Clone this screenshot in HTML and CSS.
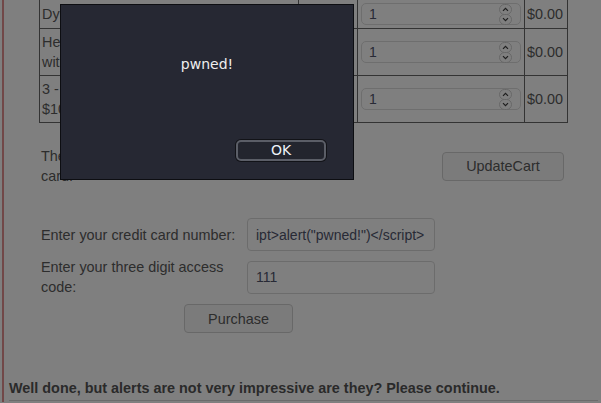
FILE: index.html
```html
<!DOCTYPE html>
<html lang="en">
<head>
<meta charset="utf-8">
<title>Reflected XSS</title>
<link rel="stylesheet" href="styles.css">
</head>
<body>
<div class="page">
  <table class="cart">
    <colgroup>
      <col class="c-name"><col class="c-price"><col class="c-qty"><col class="c-total">
    </colgroup>
    <tr>
      <td>Dynex - Traditional Notebook Case</td>
      <td class="num">27.99</td>
      <td><div class="qty"><input class="qty-input" type="text" value="1"><svg class="spin" width="13" height="21" viewBox="0 0 13 21"><rect x="0.5" y="0.5" width="12" height="10" rx="5" class="spin-box"/><rect x="0.5" y="10.5" width="12" height="10" rx="5" class="spin-box"/><polyline points="4,6.8 6.5,4.3 9,6.8" class="spin-arrow"/><polyline points="4,14.2 6.5,16.7 9,14.2" class="spin-arrow"/></svg></div></td>
      <td>$0.00</td>
    </tr>
    <tr>
      <td>Hewlett-Packard - Pavilion Notebook with Intel Centrino</td>
      <td class="num">1599.99</td>
      <td><div class="qty"><input class="qty-input" type="text" value="1"><svg class="spin" width="13" height="21" viewBox="0 0 13 21"><rect x="0.5" y="0.5" width="12" height="10" rx="5" class="spin-box"/><rect x="0.5" y="10.5" width="12" height="10" rx="5" class="spin-box"/><polyline points="4,6.8 6.5,4.3 9,6.8" class="spin-arrow"/><polyline points="4,14.2 6.5,16.7 9,14.2" class="spin-arrow"/></svg></div></td>
      <td>$0.00</td>
    </tr>
    <tr>
      <td>3 - Year Performance Service Plan $1000 and Over</td>
      <td class="num">299.99</td>
      <td><div class="qty"><input class="qty-input" type="text" value="1"><svg class="spin" width="13" height="21" viewBox="0 0 13 21"><rect x="0.5" y="0.5" width="12" height="10" rx="5" class="spin-box"/><rect x="0.5" y="10.5" width="12" height="10" rx="5" class="spin-box"/><polyline points="4,6.8 6.5,4.3 9,6.8" class="spin-arrow"/><polyline points="4,14.2 6.5,16.7 9,14.2" class="spin-arrow"/></svg></div></td>
      <td>$0.00</td>
    </tr>
  </table>
  <br>
  <table class="checkout">
    <colgroup>
      <col class="c-label"><col class="c-field"><col class="c-action">
    </colgroup>
    <tr>
      <td>The total charged to your credit card:</td>
      <td>$0.00</td>
      <td class="center"><button class="btn" type="button">UpdateCart</button></td>
    </tr>
    <tr><td>&nbsp;</td><td></td><td></td></tr>
    <tr>
      <td>Enter your credit card number:</td>
      <td><input class="field" type="text" value="ipt&gt;alert(&quot;pwned!&quot;)&lt;/script&gt;"></td>
      <td></td>
    </tr>
    <tr>
      <td>Enter your three digit access code:</td>
      <td><input class="field" type="text" value="111"></td>
      <td></td>
    </tr>
    <tr>
      <td colspan="2" class="center purchase-cell"><button class="btn" type="button">Purchase</button></td>
      <td></td>
    </tr>
  </table>
  <div class="feedback">Well done, but alerts are not very impressive are they? Please continue.</div>
</div>
<div class="overlay"></div>
<div class="dialog" role="alertdialog">
  <p class="dialog-msg">pwned!</p>
  <button class="dialog-ok" type="button">OK</button>
</div>
</body>
</html>
```

FILE: styles.css
```css
html, body {
  margin: 0;
  height: 100%;
}
body {
  font-family: "Liberation Sans", Arial, sans-serif;
  font-size: 14.4px;
  line-height: 20px;
  color: #5a5a5a;
  background: #ffffff;
  overflow: hidden;
}
.page {
  margin-left: 2px;
  margin-right: 3px;
  border-left: 2px solid #e29191;
  padding-left: 5px;
  min-height: 100%;
  box-sizing: border-box;
}

/* cart table */
.cart {
  margin: -1px 0 0 30px;
  width: 529px;
  table-layout: fixed;
  border-collapse: separate;
  border-spacing: 0;
  border-top: 1px solid #666666;
  border-left: 1px solid #666666;
}
.c-name { width: 259px; }
.c-price { width: 59px; }
.c-qty { width: 167px; }
.c-total { width: 43px; }
.cart td {
  padding: 3px;
  border-right: 1px solid #666666;
  border-bottom: 1px solid #666666;
  vertical-align: middle;
  overflow: hidden;
}
.cart td:first-child { padding-left: 2px; }
.cart td:last-child { padding-left: 2px; padding-right: 0; white-space: nowrap; }
.num { text-align: right; }

.qty {
  display: flex;
  align-items: center;
  height: 22px;
  box-sizing: border-box;
  border: 1px solid #dcdcdc;
  border-radius: 5px;
  padding: 0 8px 0 7px;
  background: #ffffff;
}
.qty-input {
  flex: 1;
  min-width: 0;
  border: 0;
  padding: 0;
  margin: 0;
  background: transparent;
  font: 14px/20px "Liberation Sans", Arial, sans-serif;
  color: #50546c;
  outline: none;
}
.spin {
  flex: none;
  margin: -1px 0;
  display: block;
}
.spin-box {
  fill: #ffffff;
  stroke: #cfcfcf;
  stroke-width: 1;
}
.spin-arrow {
  fill: none;
  stroke: #3c3c3c;
  stroke-width: 1.2;
}

/* checkout table */
.checkout {
  margin-left: 30px;
  width: 529px;
  table-layout: fixed;
  border-collapse: separate;
  border-spacing: 0;
}
.c-label { width: 206px; }
.c-field { width: 193px; }
.c-action { width: 130px; }
.checkout td {
  padding: 3px 2px;
  vertical-align: middle;
}
.checkout .purchase-cell { padding-top: 4px; padding-bottom: 2px; }
.center { text-align: center; }

.btn {
  height: 29px;
  padding: 0 23px;
  border: 1px solid #d0d0d0;
  border-radius: 4px;
  background: #f7f7f7;
  font: 14.4px/20px "Liberation Sans", Arial, sans-serif;
  color: #5a5a5a;
  vertical-align: middle;
}
.field {
  display: block;
  width: 188px;
  height: 33px;
  box-sizing: border-box;
  border: 1px solid #d9d9d9;
  border-radius: 4px;
  padding: 0 8px;
  margin: 0;
  background: #ffffff;
  font: 14px/20px "Liberation Sans", Arial, sans-serif;
  color: #50546c;
}

.feedback {
  margin-top: 43px;
  font-weight: bold;
  color: #555555;
  padding-bottom: 2px;
  border-bottom: 1px solid #d6d6d6;
}

/* modal alert */
.overlay {
  position: fixed;
  inset: 0;
  background: rgba(0, 0, 0, 0.5);
}
.dialog {
  position: fixed;
  left: 60px;
  top: 4px;
  width: 294px;
  height: 176px;
  box-sizing: border-box;
  border: 1px solid #0d0e12;
  background: #262833;
  display: flex;
  flex-direction: column;
  font-family: "DejaVu Sans", sans-serif;
  font-size: 14px;
  color: #eeeeee;
}
.dialog-msg {
  margin: 0;
  padding-top: 51px;
  line-height: 17px;
  text-align: center;
}
.dialog-ok {
  margin: auto 27px 18px auto;
  width: 90px;
  height: 21px;
  box-sizing: border-box;
  padding: 0;
  border: 2px solid #5b5e67;
  border-radius: 5px;
  box-shadow: 0 0 0 1px #121318;
  background: #23252e;
  color: #eef2f8;
  font: 14px/17px "DejaVu Sans", sans-serif;
}
```
